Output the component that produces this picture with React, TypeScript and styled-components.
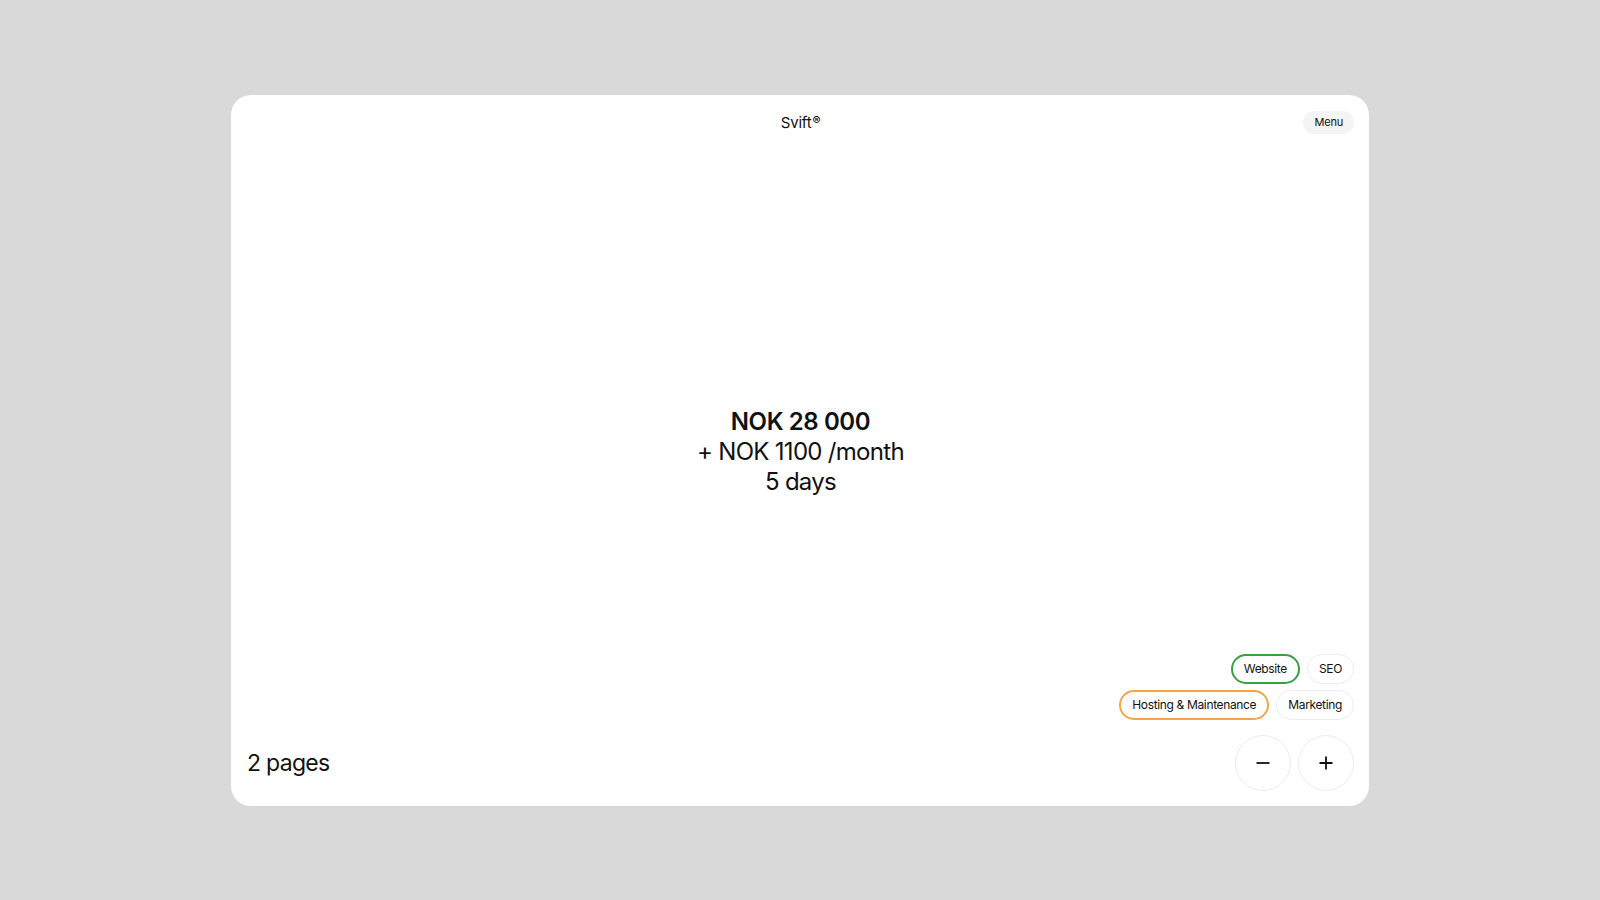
import React from "react";
import styled, { createGlobalStyle } from "styled-components";

const Global = createGlobalStyle`
  html, body { margin: 0; padding: 0; }
  body {
    background: #d9d9d9;
    font-family: Inter, "Noto Sans", "Liberation Sans", sans-serif;
    color: #111;
    -webkit-font-smoothing: antialiased;
  }
`;

const Page = styled.div`
  width: 1600px;
  height: 900px;
  display: flex;
  align-items: center;
  justify-content: center;
`;

const Card = styled.main`
  width: 1138px;
  height: 711px;
  background: #ffffff;
  border-radius: 20px;
  box-sizing: border-box;
  padding: 16px 15px 15px 16px;
  display: flex;
  flex-direction: column;
`;

const Header = styled.header`
  display: grid;
  grid-template-columns: 1fr auto 1fr;
  align-items: center;
  height: 23px;
`;

const Brand = styled.div`
  grid-column: 2;
  font-size: 15px;
  font-weight: 400;
  letter-spacing: -0.2px;
  line-height: 21px;
  height: 21px;
`;

const Reg = styled.span`
  font-size: 12px;
  font-weight: 600;
  line-height: 0;
  vertical-align: 3px;
  margin-left: 1px;
`;

const MenuButton = styled.button`
  grid-column: 3;
  justify-self: end;
  height: 23px;
  padding: 0 11px;
  border: none;
  border-radius: 999px;
  background: #f4f4f4;
  font-family: inherit;
  font-size: 11px;
  letter-spacing: -0.2px;
  color: #111;
  cursor: pointer;
`;

const Center = styled.section`
  flex: 1;
  display: flex;
  flex-direction: column;
  align-items: center;
  justify-content: center;
  text-align: center;
  padding-top: 116px;
`;

const PriceLine = styled.div<{ $bold?: boolean }>`
  font-size: 24px;
  line-height: 30px;
  font-weight: ${(p) => (p.$bold ? 600 : 400)};
  letter-spacing: ${(p) => (p.$bold ? "-0.4px" : "-0.7px")};
`;

const Footer = styled.footer`
  display: flex;
  justify-content: space-between;
  align-items: flex-end;
`;

const Pages = styled.div`
  font-size: 23px;
  line-height: 56px;
  letter-spacing: -0.7px;
`;

const RightCol = styled.div`
  display: flex;
  flex-direction: column;
  align-items: flex-end;
  gap: 15px;
`;

const Tags = styled.div`
  display: flex;
  flex-direction: column;
  align-items: flex-end;
  gap: 6px;
`;

const TagRow = styled.div`
  display: flex;
  gap: 7px;
`;

const Tag = styled.button<{ $tone?: "green" | "orange" }>`
  height: 30px;
  padding: 0 11px;
  box-sizing: border-box;
  border-radius: 999px;
  background: #fff;
  border: ${(p) =>
    p.$tone === "green"
      ? "2px solid #3a9e45"
      : p.$tone === "orange"
      ? "2px solid #f2a649"
      : "1px solid #ededed"};
  font-family: inherit;
  font-size: 12px;
  letter-spacing: -0.35px;
  color: #111;
  cursor: pointer;
`;

const Controls = styled.div`
  display: flex;
  gap: 7px;
`;

const RoundButton = styled.button`
  width: 56px;
  height: 56px;
  border-radius: 50%;
  border: 1px solid #ececec;
  background: #fff;
  display: flex;
  align-items: center;
  justify-content: center;
  padding: 0;
  cursor: pointer;
`;

const MinusIcon = () => (
  <svg width="16" height="16" viewBox="0 0 16 16" fill="none">
    <path d="M1.5 8h13" stroke="#111" strokeWidth="1.8" />
  </svg>
);

const PlusIcon = () => (
  <svg width="16" height="16" viewBox="0 0 16 16" fill="none">
    <path d="M1.5 8h13M8 1.5v13" stroke="#111" strokeWidth="1.8" />
  </svg>
);

export default function App() {
  return (
    <>
      <Global />
      <Page>
        <Card>
          <Header>
            <Brand>
              Svift<Reg>®</Reg>
            </Brand>
            <MenuButton>Menu</MenuButton>
          </Header>
          <Center>
            <PriceLine $bold>NOK 28 000</PriceLine>
            <PriceLine>+ NOK 1100 /month</PriceLine>
            <PriceLine>5 days</PriceLine>
          </Center>
          <Footer>
            <Pages>2 pages</Pages>
            <RightCol>
              <Tags>
                <TagRow>
                  <Tag $tone="green">Website</Tag>
                  <Tag>SEO</Tag>
                </TagRow>
                <TagRow>
                  <Tag $tone="orange">Hosting &amp; Maintenance</Tag>
                  <Tag>Marketing</Tag>
                </TagRow>
              </Tags>
              <Controls>
                <RoundButton aria-label="Remove page">
                  <MinusIcon />
                </RoundButton>
                <RoundButton aria-label="Add page">
                  <PlusIcon />
                </RoundButton>
              </Controls>
            </RightCol>
          </Footer>
        </Card>
      </Page>
    </>
  );
}
